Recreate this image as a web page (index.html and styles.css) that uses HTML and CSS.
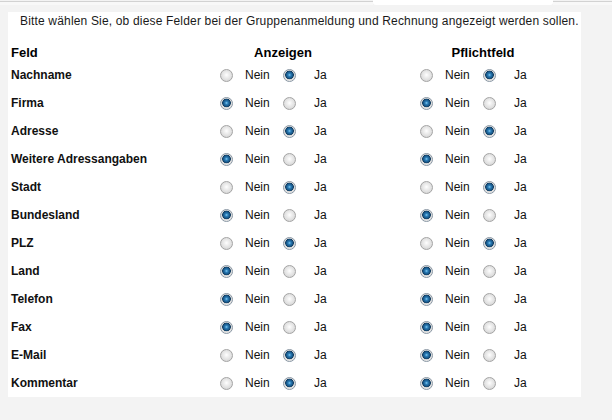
FILE: index.html
```html
<!DOCTYPE html>
<html lang="de">
<head>
  <meta charset="UTF-8" />
  <meta name="viewport" content="width=device-width, initial-scale=1.0">
  <title>Felder</title>
  <link rel="stylesheet" href="styles.css">
</head>
<body>
  <div class="tabs">
    <div class="tab tab-first"></div>
    <div class="tab tab-active"></div>
    <div class="tab tab-rest"></div>
  </div>

  <div class="panel">
    <p class="intro">Bitte wählen Sie, ob diese Felder bei der Gruppenanmeldung und Rechnung angezeigt werden sollen.</p>

    <div class="fields">
      <div class="head head-label">Feld</div>
      <div class="head"><span class="head-text">Anzeigen</span></div>
      <div class="head"><span class="head-text">Pflichtfeld</span></div>

      <div class="label">Nachname</div>
      <div class="choice"><input type="radio" name="a1"><span>Nein</span><input type="radio" name="a1" checked><span>Ja</span></div>
      <div class="choice"><input type="radio" name="p1"><span>Nein</span><input type="radio" name="p1" checked><span>Ja</span></div>

      <div class="label">Firma</div>
      <div class="choice"><input type="radio" name="a2" checked><span>Nein</span><input type="radio" name="a2"><span>Ja</span></div>
      <div class="choice"><input type="radio" name="p2" checked><span>Nein</span><input type="radio" name="p2"><span>Ja</span></div>

      <div class="label">Adresse</div>
      <div class="choice"><input type="radio" name="a3"><span>Nein</span><input type="radio" name="a3" checked><span>Ja</span></div>
      <div class="choice"><input type="radio" name="p3"><span>Nein</span><input type="radio" name="p3" checked><span>Ja</span></div>

      <div class="label">Weitere Adressangaben</div>
      <div class="choice"><input type="radio" name="a4" checked><span>Nein</span><input type="radio" name="a4"><span>Ja</span></div>
      <div class="choice"><input type="radio" name="p4" checked><span>Nein</span><input type="radio" name="p4"><span>Ja</span></div>

      <div class="label">Stadt</div>
      <div class="choice"><input type="radio" name="a5"><span>Nein</span><input type="radio" name="a5" checked><span>Ja</span></div>
      <div class="choice"><input type="radio" name="p5"><span>Nein</span><input type="radio" name="p5" checked><span>Ja</span></div>

      <div class="label">Bundesland</div>
      <div class="choice"><input type="radio" name="a6" checked><span>Nein</span><input type="radio" name="a6"><span>Ja</span></div>
      <div class="choice"><input type="radio" name="p6" checked><span>Nein</span><input type="radio" name="p6"><span>Ja</span></div>

      <div class="label">PLZ</div>
      <div class="choice"><input type="radio" name="a7"><span>Nein</span><input type="radio" name="a7" checked><span>Ja</span></div>
      <div class="choice"><input type="radio" name="p7"><span>Nein</span><input type="radio" name="p7" checked><span>Ja</span></div>

      <div class="label">Land</div>
      <div class="choice"><input type="radio" name="a8" checked><span>Nein</span><input type="radio" name="a8"><span>Ja</span></div>
      <div class="choice"><input type="radio" name="p8" checked><span>Nein</span><input type="radio" name="p8"><span>Ja</span></div>

      <div class="label">Telefon</div>
      <div class="choice"><input type="radio" name="a9" checked><span>Nein</span><input type="radio" name="a9"><span>Ja</span></div>
      <div class="choice"><input type="radio" name="p9" checked><span>Nein</span><input type="radio" name="p9"><span>Ja</span></div>

      <div class="label">Fax</div>
      <div class="choice"><input type="radio" name="a10" checked><span>Nein</span><input type="radio" name="a10"><span>Ja</span></div>
      <div class="choice"><input type="radio" name="p10" checked><span>Nein</span><input type="radio" name="p10"><span>Ja</span></div>

      <div class="label">E-Mail</div>
      <div class="choice"><input type="radio" name="a11"><span>Nein</span><input type="radio" name="a11" checked><span>Ja</span></div>
      <div class="choice"><input type="radio" name="p11" checked><span>Nein</span><input type="radio" name="p11"><span>Ja</span></div>

      <div class="label">Kommentar</div>
      <div class="choice"><input type="radio" name="a12"><span>Nein</span><input type="radio" name="a12" checked><span>Ja</span></div>
      <div class="choice"><input type="radio" name="p12" checked><span>Nein</span><input type="radio" name="p12"><span>Ja</span></div>
    </div>
  </div>
</body>
</html>
```

FILE: styles.css
```css
body {
  font-family: "Liberation Sans", Arial, sans-serif;
  font-size: 12px;
  color: #111;
  margin: 0;
  background-color: #f3f3f3;
}
.tabs {
  display: flex;
  height: 5px;
}
.tab {
  margin-top: 1px;
  border-top: 1px solid #d2d2d2;
  background-color: #f8f8f8;
}
.tab-first {
  width: 373px;
}
.tab-active {
  width: 180px;
  margin-top: 0;
  border-top: none;
  background-color: #fff;
  border-radius: 0 0 3px 3px;
}
.tab-rest {
  flex: 1;
}
.panel {
  margin: 7px 31px 0 8px;
  height: 385px;
  background-color: #fff;
}
.intro {
  margin: 0 0 16px 0;
  padding: 1px 0 0 12px;
  line-height: 16px;
  letter-spacing: 0.17px;
  white-space: nowrap;
  color: #1a1a1a;
}
.fields {
  display: grid;
  grid-template-columns: 212px 200px 1fr;
  grid-template-rows: 16px;
  grid-auto-rows: 28px;
}
.head {
  line-height: 16px;
  font-size: 13px;
  font-weight: bold;
  color: #000;
}
.head-label {
  padding-left: 3px;
}
.head-text {
  display: block;
  width: 126px;
  text-align: center;
}
.label {
  padding-left: 3px;
  line-height: 28px;
  font-weight: bold;
  color: #111;
}
.choice {
  display: grid;
  grid-template-columns: 25px 38px 31px auto;
  align-items: center;
}
.choice span {
  line-height: 28px;
}
input[type="radio"] {
  -webkit-appearance: none;
  appearance: none;
  margin: 0;
  width: 13px;
  height: 13px;
  border-radius: 50%;
  border: 1px solid #a4a4a4;
  box-sizing: border-box;
  background: radial-gradient(circle at 50% 45%, #ffffff 0, #f1f1f1 2px, #d9d9d9 6px);
}
input[type="radio"]:checked {
  border-color: #8a97a4;
  background: radial-gradient(circle at 50% 45%, #86cdf2 0, #2a7db8 1.5px, #164f7d 3.5px, #0e3a5e 4px, #d6d6d6 4.6px, #ededed 6px);
}
```
